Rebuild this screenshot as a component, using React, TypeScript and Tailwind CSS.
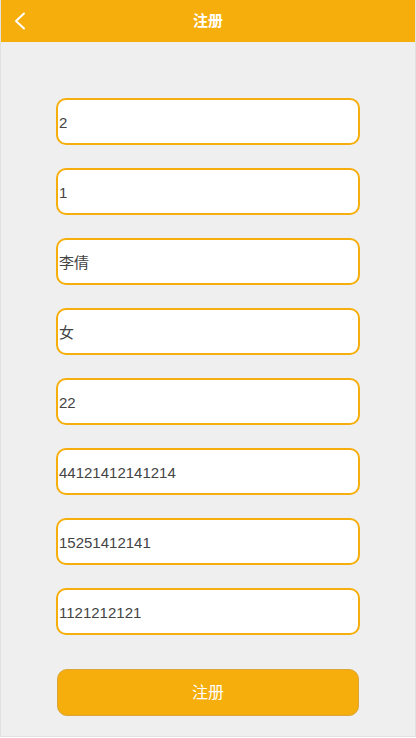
import React from "react";

const values = ["2", "1", "李倩", "女", "22", "44121412141214", "15251412141", "1121212121"];

export default function App() {
  return (
    <div
      className="w-[416px] h-[737px] bg-[#efefef] border-x border-b border-[#e2e2e2] flex flex-col"
      style={{ fontFamily: '"Liberation Sans", Arial, "Noto Sans CJK SC", sans-serif' }}
    >
      <div className="h-[42px] bg-[#f5ae0b] flex items-center relative shrink-0">
        <svg className="absolute left-[12px] top-[12px]" width="14" height="18" viewBox="0 0 14 18" fill="none">
          <path d="M11 1.5 L3 9 L11 16.5" stroke="white" strokeWidth="2" strokeLinecap="round" strokeLinejoin="round" />
        </svg>
        <div className="flex-1 text-center text-white font-bold text-[15px]">注册</div>
      </div>
      <div className="flex flex-col items-center pt-[56px] gap-[23px]">
        {values.map((v, i) => (
          <div
            key={i}
            className="w-[304px] h-[47px] bg-white border-2 border-[#f5ae0b] rounded-[10px] flex items-center pl-[1px] pt-[4px] text-[15px] text-[#444]"
          >
            {v}
          </div>
        ))}
        <button className="mt-[11px] w-[302px] h-[47px] bg-[#f5ae0b] border border-[#dca53a] rounded-[10px] text-white text-[16px]">
          注册
        </button>
      </div>
    </div>
  );
}
